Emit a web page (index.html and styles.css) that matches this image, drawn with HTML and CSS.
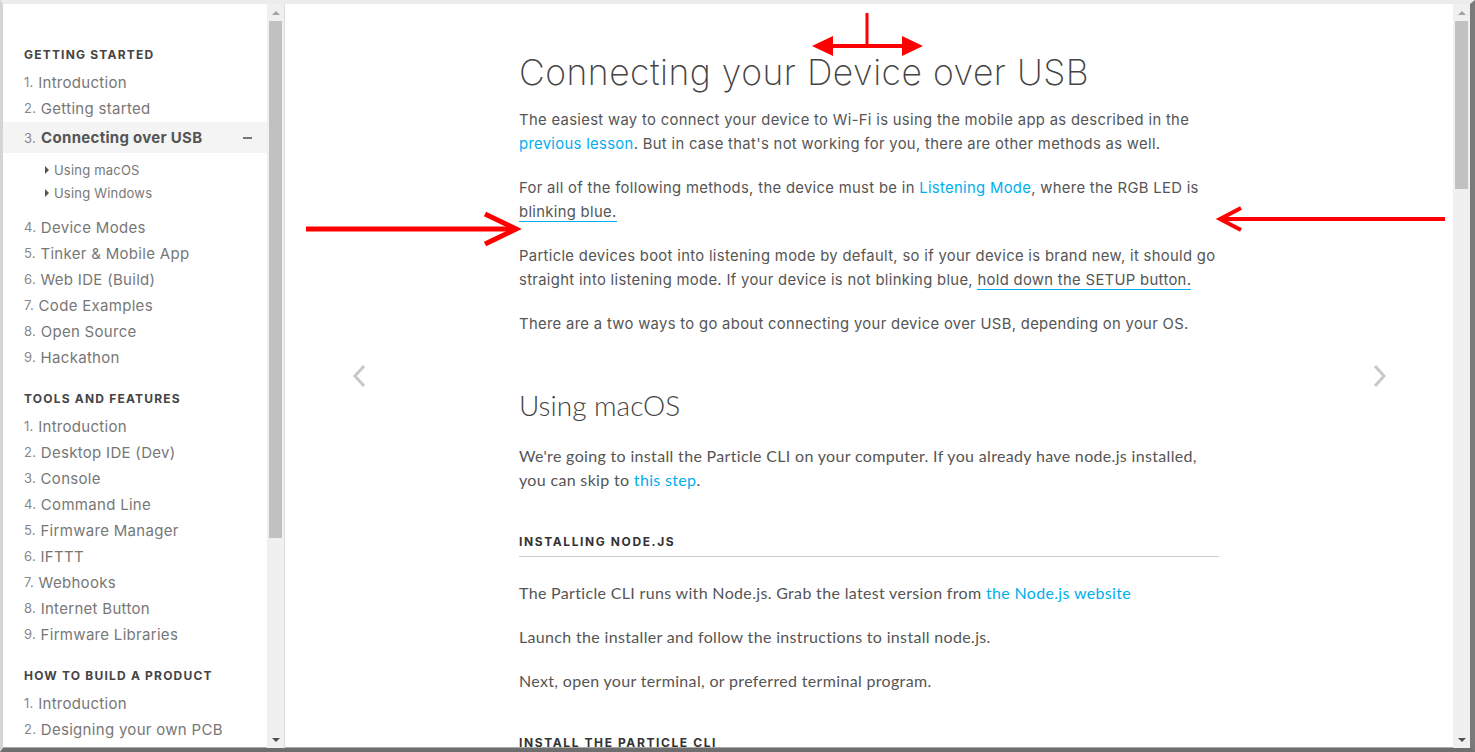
FILE: index.html
```html
<!DOCTYPE html>
<html lang="en">
<head>
    <meta charset="UTF-8">
    <title>Connecting your Device over USB</title>
    <link rel="stylesheet" href="styles.css">
</head>
<body>
    <div class="window">
        <!-- ===== Sidebar ===== -->
        <aside class="sidebar">
            <nav class="toc">
                <div class="toc-group">
                    <h4 class="toc-title">Getting Started</h4>
                    <a class="toc-item"><span class="num">1.</span> Introduction</a>
                    <a class="toc-item"><span class="num">2.</span> Getting started</a>
                    <a class="toc-item active"><span class="num">3.</span><b>Connecting over USB</b><span class="collapse"></span></a>
                    <div class="toc-sub">
                        <a class="sub-item">Using macOS</a>
                        <a class="sub-item">Using Windows</a>
                    </div>
                    <a class="toc-item"><span class="num">4.</span> Device Modes</a>
                    <a class="toc-item"><span class="num">5.</span> Tinker &amp; Mobile App</a>
                    <a class="toc-item"><span class="num">6.</span> Web IDE (Build)</a>
                    <a class="toc-item"><span class="num">7.</span> Code Examples</a>
                    <a class="toc-item"><span class="num">8.</span> Open Source</a>
                    <a class="toc-item"><span class="num">9.</span> Hackathon</a>
                </div>
                <div class="toc-group">
                    <h4 class="toc-title">Tools and Features</h4>
                    <a class="toc-item"><span class="num">1.</span> Introduction</a>
                    <a class="toc-item"><span class="num">2.</span> Desktop IDE (Dev)</a>
                    <a class="toc-item"><span class="num">3.</span> Console</a>
                    <a class="toc-item"><span class="num">4.</span> Command Line</a>
                    <a class="toc-item"><span class="num">5.</span> Firmware Manager</a>
                    <a class="toc-item"><span class="num">6.</span> IFTTT</a>
                    <a class="toc-item"><span class="num">7.</span> Webhooks</a>
                    <a class="toc-item"><span class="num">8.</span> Internet Button</a>
                    <a class="toc-item"><span class="num">9.</span> Firmware Libraries</a>
                </div>
                <div class="toc-group">
                    <h4 class="toc-title">How to build a product</h4>
                    <a class="toc-item"><span class="num">1.</span> Introduction</a>
                    <a class="toc-item"><span class="num">2.</span> Designing your own PCB</a>
                </div>
            </nav>
            <div class="scrollbar">
                <span class="sb-btn up"></span>
                <div class="sb-track"><div class="sb-thumb toc-thumb"></div></div>
                <span class="sb-btn down"></span>
            </div>
        </aside>

        <!-- ===== Page ===== -->
        <main class="page">
            <div class="page-body">
                <a class="pager prev">
                    <svg width="16" height="24" viewBox="0 0 16 24"><polyline points="13,2 4,12 13,22" /></svg>
                </a>
                <article class="content">
                    <h1>Connecting your Device over USB</h1>
                    <p>The easiest way to connect your device to Wi-Fi is using the mobile app as described in the <a class="link">previous lesson</a>. But in case that's not working for you, there are other methods as well.</p>
                    <p>For all of the following methods, the device must be in <a class="link">Listening Mode</a>, where the RGB LED is <a class="hint">blinking blue.</a></p>
                    <p>Particle devices boot into listening mode by default, so if your device is brand new, it should go straight into listening mode. If your device is not blinking blue, <a class="hint">hold down the SETUP button.</a></p>
                    <p>There are a two ways to go about connecting your device over USB, depending on your OS.</p>

                    <section class="os-section">
                        <h2>Using macOS</h2>
                        <p>We're going to install the Particle CLI on your computer. If you already have node.js installed, you can skip to <a class="link">this step</a>.</p>
                        <h3>Installing Node.js</h3>
                        <p>The Particle CLI runs with Node.js. Grab the latest version from <a class="link">the Node.js website</a></p>
                        <p>Launch the installer and follow the instructions to install node.js.</p>
                        <p>Next, open your terminal, or preferred terminal program.</p>
                        <h3>Install the Particle CLI</h3>
                    </section>
                </article>
                <a class="pager next">
                    <svg width="16" height="24" viewBox="0 0 16 24"><polyline points="3,2 12,12 3,22" /></svg>
                </a>
            </div>
            <div class="scrollbar">
                <span class="sb-btn up"></span>
                <div class="sb-track"><div class="sb-thumb page-thumb"></div></div>
                <span class="sb-btn down"></span>
            </div>
        </main>
    </div>

    <!-- red markup drawn over the screenshot -->
    <svg class="annotations" width="1475" height="752" viewBox="0 0 1475 752">
        <g stroke="#f00" fill="none">
            <line x1="867" y1="13" x2="867" y2="47" stroke-width="3" />
            <line x1="830" y1="46" x2="905" y2="46" stroke-width="4" />
            <line x1="306" y1="229" x2="514" y2="229" stroke-width="5" />
            <polyline points="485,214 516,229 485,244" stroke-width="5" />
            <line x1="1222" y1="219" x2="1445" y2="219" stroke-width="4" />
            <polyline points="1241,208 1220,219 1241,230" stroke-width="4" />
        </g>
        <g fill="#f00">
            <polygon points="812,46 833,36 833,56" />
            <polygon points="923,46 902,36 902,56" />
        </g>
    </svg>
</body>
</html>
```

FILE: styles.css
```css
body {
    margin: 0;
    background: #fff;
    font-family: Inter, "Noto Sans", sans-serif;
    color: #555;
    overflow: hidden;
}

a {
    text-decoration: none;
}

.window {
    display: flex;
    height: 752px;
    box-sizing: border-box;
    border-top: 4px solid #ececec;
    border-left: 3px solid #d4d4d4;
    border-bottom: 4px solid #6e6e6e;
    border-right: 5px solid #7a7a7a;
    box-shadow: inset 0 -1px 0 #aaa;
}

/* ===== Sidebar ===== */
.sidebar {
    display: flex;
    width: 281px;
    flex-shrink: 0;
    border-right: 1px solid #dcdcdc;
}

.toc {
    flex: 1;
    padding-top: 41px;
    overflow: hidden;
}

.toc-group + .toc-group {
    margin-top: 19px;
}

.toc-title {
    margin: 0 0 4px;
    padding-left: 21px;
    height: 20px;
    line-height: 20px;
    font-size: 12px;
    font-weight: 700;
    letter-spacing: 1.2px;
    text-transform: uppercase;
    color: #444;
}

.toc-item {
    display: flex;
    align-items: center;
    height: 26px;
    padding-left: 21px;
    font-size: 15px;
    color: #777;
    white-space: pre;
    letter-spacing: 0.3px;
}

.toc-item .num {
    font-size: 13px;
    color: #888;
}

.toc-item.active {
    height: 31px;
    margin-top: 1px;
    background: #f4f4f4;
}

.toc-item.active b {
    margin-left: 5px;
    color: #555;
    font-weight: 700;
}

.collapse {
    margin-left: auto;
    margin-right: 15px;
    width: 9px;
    height: 2px;
    background: #777;
}

.toc-sub {
    padding: 5px 0 10px 42px;
}

.sub-item {
    display: flex;
    align-items: center;
    height: 23px;
    font-size: 13px;
    color: #777;
    letter-spacing: 0.2px;
}

.sub-item::before {
    content: "";
    margin-right: 5px;
    border-left: 4px solid #555;
    border-top: 4px solid transparent;
    border-bottom: 4px solid transparent;
}

/* ===== Fake scrollbars ===== */
.scrollbar {
    display: flex;
    flex-direction: column;
    width: 17px;
    flex-shrink: 0;
    background: #f0f0f0;
}

.sb-btn {
    height: 17px;
    flex-shrink: 0;
    display: flex;
    align-items: center;
    justify-content: center;
}

.sb-btn::before {
    content: "";
    border-left: 4px solid transparent;
    border-right: 4px solid transparent;
}

.sb-btn.up::before {
    border-bottom: 4px solid #a3a3a3;
}

.sb-btn.down::before {
    border-top: 4px solid #505050;
}

.sb-track {
    flex: 1;
    padding: 0 2px;
}

.sb-thumb {
    background: #c1c1c1;
}

.toc-thumb {
    height: 517px;
}

.page-thumb {
    height: 168px;
}

/* ===== Page ===== */
.page {
    flex: 1;
    display: flex;
    overflow: hidden;
}

.page-body {
    flex: 1;
    position: relative;
    display: flex;
    justify-content: center;
    overflow: hidden;
}

.pager {
    position: absolute;
    top: 360px;
}

.pager svg {
    display: block;
}

.pager polyline {
    fill: none;
    stroke: #c8c8c8;
    stroke-width: 3;
}

.prev {
    left: 66px;
}

.next {
    right: 65px;
}

.content {
    width: 700px;
    padding-top: 47px;
}

.content h1 {
    margin: 0 0 14px;
    font-size: 35.5px;
    line-height: 43px;
    font-weight: 200;
    color: #444;
    letter-spacing: 0.5px;
}

.content p {
    margin: 0 0 20px;
    font-size: 14.8px;
    line-height: 24px;
    letter-spacing: 0.33px;
}

.link {
    color: #00aeef;
}

.hint {
    color: #555;
    border-bottom: 1px solid #00aeef;
}

.os-section {
    padding-top: 32px;
    font-family: Lato, "Noto Sans", sans-serif;
}

.os-section h2 {
    margin: 0 0 22px;
    font-size: 28px;
    line-height: 34px;
    font-weight: 300;
    color: #444;
}

.os-section p {
    font-size: 16px;
    letter-spacing: 0.33px;
    color: #555;
}

.os-section h3 {
    margin: 42px 0 24px;
    padding-bottom: 6px;
    border-bottom: 1px solid #ccc;
    font-family: Inter, "Noto Sans", sans-serif;
    font-size: 12px;
    line-height: 16px;
    font-weight: 700;
    letter-spacing: 1.6px;
    text-transform: uppercase;
    color: #333;
}

.annotations {
    position: absolute;
    top: 0;
    left: 0;
    pointer-events: none;
}
```
